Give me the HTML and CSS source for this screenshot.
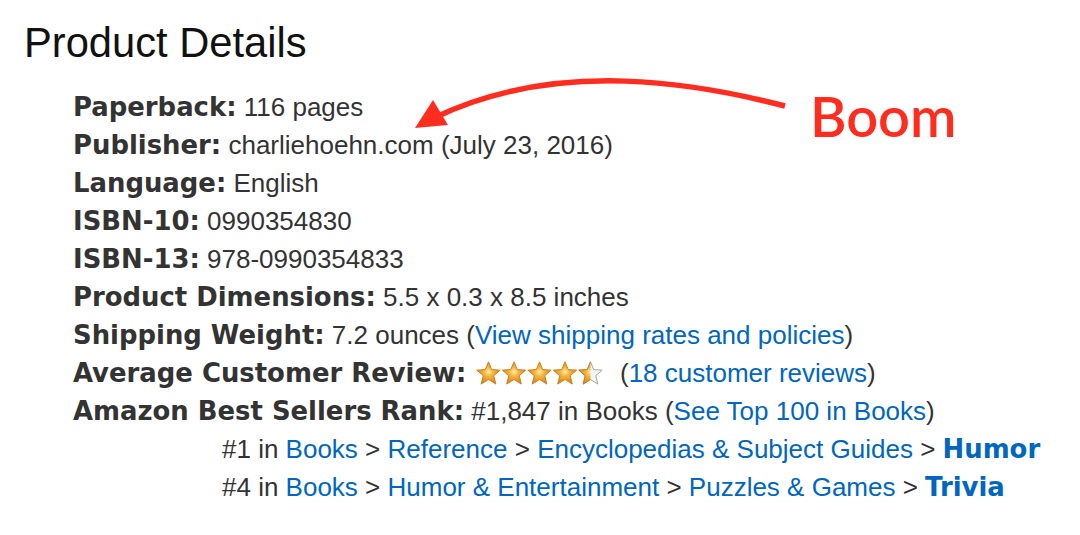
FILE: index.html
```html
<!DOCTYPE html>
<html>
<head>
<meta charset="utf-8">
<link rel="stylesheet" href="styles.css">
</head>
<body>
<div class="page">
  <h1 class="title">Product Details</h1>
  <ul class="details">
    <li><b>Paperback:</b> 116 pages</li>
    <li><b>Publisher:</b> charliehoehn.com (July 23, 2016)</li>
    <li><b>Language:</b> English</li>
    <li><b>ISBN-10:</b> 0990354830</li>
    <li><b>ISBN-13:</b> 978-0990354833</li>
    <li><b>Product Dimensions:</b> 5.5 x 0.3 x 8.5 inches</li>
    <li><b>Shipping Weight:</b> 7.2 ounces (<a href="#">View shipping rates and policies</a>)</li>
    <li><b>Average Customer Review:</b> <svg class="stars" width="130" height="26" viewBox="0 0 130 26">
        <defs>
          <radialGradient id="glow" cx="0.5" cy="0.45" r="0.5">
            <stop offset="0" stop-color="#fde9b0"/>
            <stop offset="0.4" stop-color="#f4b63c"/>
            <stop offset="1" stop-color="#dc8a1c"/>
          </radialGradient>
          <polygon id="star" points="12.5,0.8 15.73,8.55 24.2,9.14 17.73,14.70 19.85,23.1 12.5,18.5 5.15,23.1 7.27,14.70 0.8,9.14 9.27,8.55"/>
          <clipPath id="half"><rect x="0" y="0" width="12.5" height="26"/></clipPath>
        </defs>
        <use href="#star" x="0" y="1" fill="url(#glow)" stroke="#c7781a" stroke-width="0.9"/>
        <use href="#star" x="25.5" y="1" fill="url(#glow)" stroke="#c7781a" stroke-width="0.9"/>
        <use href="#star" x="51" y="1" fill="url(#glow)" stroke="#c7781a" stroke-width="0.9"/>
        <use href="#star" x="76.5" y="1" fill="url(#glow)" stroke="#c7781a" stroke-width="0.9"/>
        <g transform="translate(102,1)">
          <use href="#star" fill="#f4f4f4" stroke="#a8a8a8" stroke-width="1"/>
          <g clip-path="url(#half)">
            <use href="#star" fill="url(#glow)" stroke="#c7781a" stroke-width="0.9"/>
          </g>
        </g>
      </svg> &nbsp;(<a href="#">18 customer reviews</a>)</li>
    <li><b>Amazon Best Sellers Rank:</b> #1,847 in Books (<a href="#">See Top 100 in Books</a>)
      <ul class="ranks">
        <li>#1 in <a href="#">Books</a> &gt; <a href="#">Reference</a> &gt; <a href="#">Encyclopedias &amp; Subject Guides</a> &gt; <a href="#" class="strong">Humor</a></li>
        <li>#4 in <a href="#">Books</a> &gt; <a href="#">Humor &amp; Entertainment</a> &gt; <a href="#">Puzzles &amp; Games</a> &gt; <a href="#" class="strong">Trivia</a></li>
      </ul>
    </li>
  </ul>

  <svg class="annotation" width="1080" height="535" viewBox="0 0 1080 535">
    <path d="M785,106 C700,84 560,58 436,117" fill="none" stroke="#ff2d1f" stroke-width="5.5"/>
    <polygon points="415,128 433,100 448,125" fill="#ff2d1f"/>
  </svg>
  <div class="boom">Boom</div>
</div>
</body>
</html>
```

FILE: styles.css
```css
html, body {
  margin: 0;
  padding: 0;
  background: #ffffff;
}

.page {
  position: relative;
  width: 1080px;
  height: 535px;
  overflow: hidden;
}

.title {
  margin: 0;
  padding: 22px 0 0 24px;
  font-family: "Liberation Sans", Arial, sans-serif;
  font-weight: normal;
  font-size: 41.7px;
  line-height: 41px;
  color: #111111;
}

.details {
  list-style: none;
  margin: 25px 0 0 0;
  padding: 0 0 0 73px;
  font-family: "Liberation Sans", Arial, sans-serif;
  font-size: 26px;
  line-height: 38px;
  color: #333333;
}

.details li {
  white-space: nowrap;
}

.details b {
  font-family: "DejaVu Sans", Verdana, sans-serif;
  font-weight: bold;
  font-size: 25.9px;
  line-height: 30px;
  color: #333333;
}

.details a {
  color: #0066c0;
  text-decoration: none;
}

.details a.strong {
  font-family: "DejaVu Sans", Verdana, sans-serif;
  font-weight: bold;
  font-size: 25.9px;
  line-height: 30px;
}

.ranks {
  list-style: none;
  margin: 0;
  padding: 0 0 0 149px;
}

.stars {
  vertical-align: -4px;
  margin-left: 2px;
}

.annotation {
  position: absolute;
  left: 0;
  top: 0;
  pointer-events: none;
}

.boom {
  position: absolute;
  left: 810px;
  top: 84px;
  font-family: Lato, "Open Sans", sans-serif;
  font-weight: 600;
  font-size: 56px;
  line-height: 64px;
  color: #ff2d1f;
}
```
